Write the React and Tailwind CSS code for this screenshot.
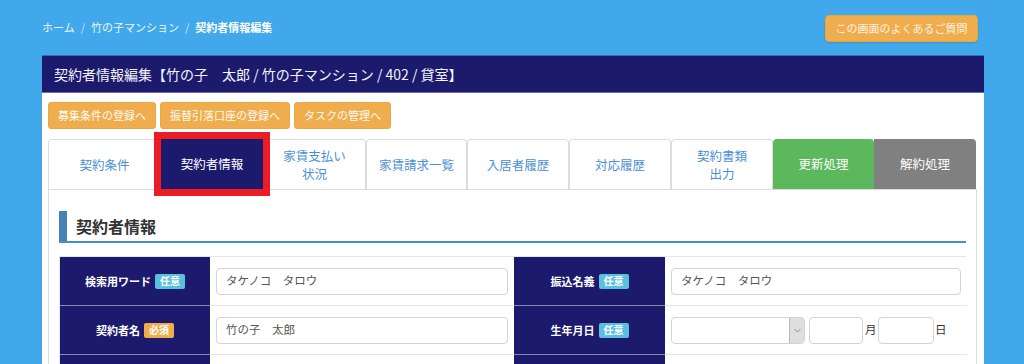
import React from "react";

const FONT = { fontFamily: '"Noto Sans CJK JP", "Noto Sans", sans-serif' };

function Badge({ kind }) {
  const req = kind === "req";
  return (
    <span
      className={`ml-[4px] inline-flex h-[15px] w-[30px] items-center justify-center rounded-[2px] text-[10px] font-bold leading-none text-white ${
        req ? "bg-[#f0ad4e]" : "bg-[#5bc0de]"
      }`}
    >
      {req ? "必須" : "任意"}
    </span>
  );
}

function Label({ text, kind, last }) {
  return (
    <div
      className={`flex h-[49px] items-center justify-center bg-[#1b1a6d] text-[11px] font-bold text-white ${
        last ? "" : "border-b border-[#8a8aa8]"
      }`}
    >
      <span>{text}</span>
      {kind && <Badge kind={kind} />}
    </div>
  );
}

function Cell({ children, last }) {
  return (
    <div
      className={`flex h-[49px] items-center bg-white px-[6px] ${
        last ? "" : "border-b border-[#e6e6e6]"
      }`}
    >
      {children}
    </div>
  );
}

function TextInput({ value }) {
  return (
    <div className="flex h-[27px] w-full items-center rounded-[4px] border border-[#d4d4d4] bg-white pl-[9px] text-[11.5px] text-[#555]">
      {value}
    </div>
  );
}

const tabs = [
  { label: ["契約条件"], w: "w-[113px]" },
  { label: ["契約者情報"], w: "w-[102px]", active: true },
  { label: ["家賃支払い", "状況"], w: "w-[103px]" },
  { label: ["家賃請求一覧"], w: "w-[101px]" },
  { label: ["入居者履歴"], w: "w-[102px]" },
  { label: ["対応履歴"], w: "w-[102px]" },
  { label: ["契約書類", "出力"], w: "w-[102px]" },
  { label: ["更新処理"], w: "w-[101px]", green: true },
  { label: ["解約処理"], w: "w-[102px]", gray: true },
];

export default function App() {
  return (
    <div className="h-[364px] w-full overflow-hidden bg-[#41a9eb]" style={FONT}>
      {/* top bar */}
      <div className="flex items-start justify-between pl-[42px] pr-[46px] pt-[15px]">
        <div className="flex h-[25px] items-center text-[11px] text-[#eef6fd]">
          <span>ホーム</span>
          <span className="px-[6px] text-[#c9e3f7]">/</span>
          <span>竹の子マンション</span>
          <span className="px-[6px] text-[#c9e3f7]">/</span>
          <span className="font-bold text-white">契約者情報編集</span>
        </div>
        <div className="flex h-[27px] w-[153px] items-center justify-center rounded-[4px] border border-[#eaa440] bg-[#f0ad4e] text-[11px] text-[#fdf3e2] shadow-[0_1px_2px_rgba(0,0,0,0.15)]">
          この画面のよくあるご質問
        </div>
      </div>

      {/* main panel */}
      <div className="ml-[42px] mr-[40px] mt-[13px]">
        <div className="flex h-[38px] items-center border-t border-[#2f6fb0] border-b border-b-[#6c6ca6] bg-[#1b1a6d] pl-[12px] text-[14px] text-[#f2f2f8]">
          契約者情報編集【竹の子　太郎 / 竹の子マンション / 402 / 貸室】
        </div>
        <div className="bg-white pl-[6px] pr-[7px] pt-[9px]">
          {/* buttons */}
          <div className="flex gap-[4px]">
            {["募集条件の登録へ", "振替引落口座の登録へ", "タスクの管理へ"].map((t) => (
              <div
                key={t}
                className="flex h-[27px] items-center rounded-[3px] border border-[#eea640] bg-[#f0ad4e] px-[9px] text-[11px] text-[#fffaf2]"
              >
                {t}
              </div>
            ))}
          </div>

          {/* tabs */}
          <div className="mt-[10px] flex">
            {tabs.map((t, i) => {
              let cls =
                "relative flex h-[50px] flex-col items-center justify-center text-center text-[12.5px] leading-[18px] ";
              if (t.active) {
                cls +=
                  "z-10 bg-[#1b1a6d] text-white outline outline-[7px] outline-[#ec1c24] ";
              } else if (t.green) {
                cls += "rounded-t-[4px] bg-[#5cb85c] text-white ";
              } else if (t.gray) {
                cls += "rounded-tr-[4px] bg-[#808080] text-white ";
              } else {
                cls +=
                  "rounded-t-[4px] border border-[#dcdcdc] border-b-0 bg-white text-[#4a8fd6] ";
              }
              return (
                <div key={i} className={`${cls}${t.w}`}>
                  {t.label.map((l) => (
                    <span key={l}>{l}</span>
                  ))}
                </div>
              );
            })}
          </div>

          {/* content panel */}
          <div className="border border-[#dcdcdc] px-[10px] pt-[21px] pb-[20px]">
            {/* heading */}
            <div className="flex h-[32px] items-center border-b-2 border-[#4a8cc9]">
              <div className="h-full w-[8px] bg-[#4682b4]" />
              <span className="pl-[9px] text-[16px] font-bold text-[#333]">契約者情報</span>
            </div>

            {/* table */}
            <div className="mt-[13px] grid grid-cols-[150px_304px_151px_302px] border border-[#e6e6e6]">
              <Label text="検索用ワード" kind="opt" />
              <Cell>
                <TextInput value="タケノコ　タロウ" />
              </Cell>
              <Label text="振込名義" kind="opt" />
              <Cell>
                <TextInput value="タケノコ　タロウ" />
              </Cell>

              <Label text="契約者名" kind="req" />
              <Cell>
                <TextInput value="竹の子　太郎" />
              </Cell>
              <Label text="生年月日" kind="opt" />
              <Cell>
                <div className="flex items-center text-[11.5px] text-[#333]">
                  <div className="flex h-[27px] w-[134px] items-stretch overflow-hidden rounded-[4px] border border-[#d4d4d4] bg-white">
                    <div className="flex-1" />
                    <div className="flex w-[15px] items-center justify-center border-l border-[#b8b8b8] bg-[#dedede]">
                      <svg width="7" height="5" viewBox="0 0 7 5">
                        <path d="M0.5 1 L3.5 4 L6.5 1" fill="none" stroke="#888" strokeWidth="1" />
                      </svg>
                    </div>
                  </div>
                  <div className="ml-[4px] h-[27px] w-[54px] rounded-[4px] border border-[#d4d4d4]" />
                  <span className="ml-[2px] w-[13px]">月</span>
                  <div className="h-[27px] w-[56px] rounded-[4px] border border-[#d4d4d4]" />
                  <span className="ml-[1px]">日</span>
                </div>
              </Cell>

              <Label text="" last />
              <Cell last />
              <Label text="" last />
              <Cell last />
            </div>
          </div>
        </div>
      </div>
    </div>
  );
}
